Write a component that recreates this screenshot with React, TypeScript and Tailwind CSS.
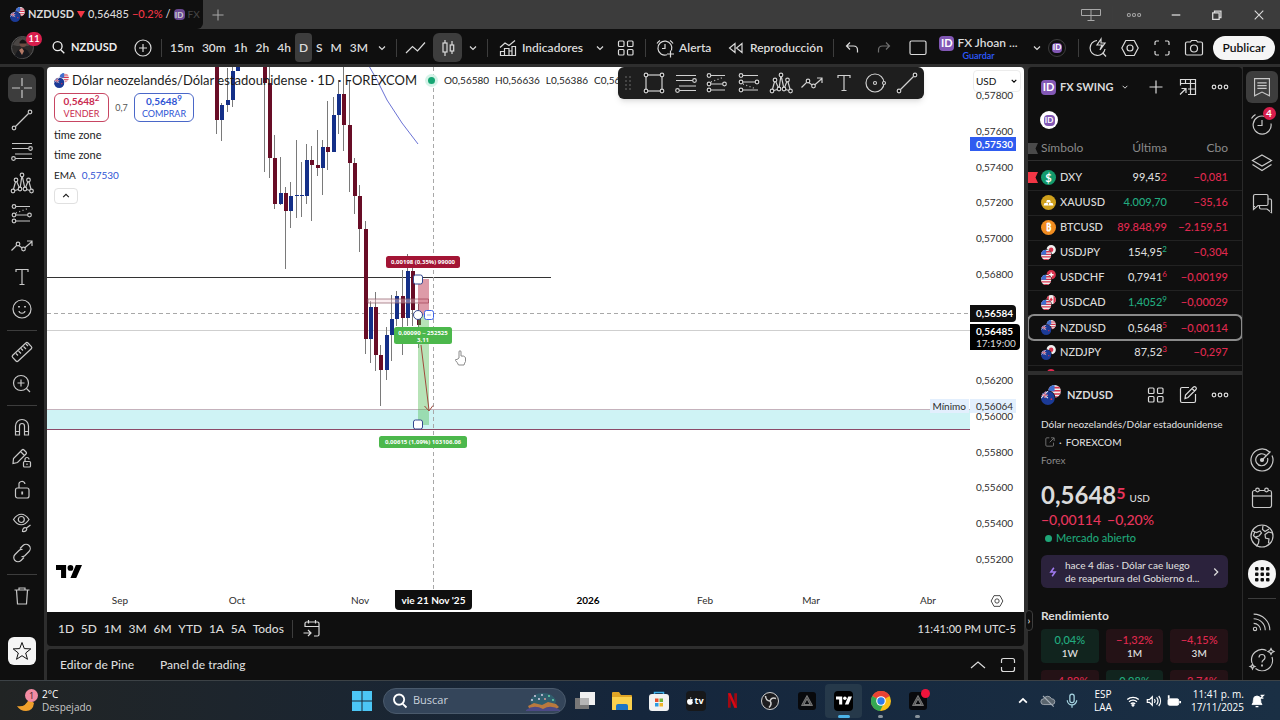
import type { ReactNode } from "react";
import clsx from "clsx";

type IconProps = { size?: number; className?: string; children: ReactNode };

const Glyph = ({ size = 28, className, children }: IconProps) => (
  <svg
    width={size}
    height={size}
    viewBox="0 0 28 28"
    fill="none"
    stroke="currentColor"
    strokeWidth="1.2"
    className={clsx("shrink-0", className)}
    aria-hidden
  >
    {children}
  </svg>
);

const Dots = ({ points, r = 1.8 }: { points: number[][]; r?: number }) => (
  <g className="fill-[#0f0f0f]">
    {points.map(([x, y]) => (
      <circle key={`${x}-${y}`} cx={x} cy={y} r={r} />
    ))}
  </g>
);

const icons: Record<string, ReactNode> = {
  cross: <path d="M14 4v8M14 16v8M4 14h8M16 14h8" />,
  trend: (
    <>
      <path d="M7.5 20.5l13-13" />
      <Dots points={[[6, 22], [22, 6]]} />
    </>
  ),
  fib: (
    <>
      <path d="M4 6.500h20M4 11.500h17M7 17h17M7 21.500h17" />
      <Dots points={[[22.5, 11.5], [5.5, 21.5]]} />
    </>
  ),
  pattern: (
    <>
      <path d="M5 22l3-11 4 9 2-14 3 14 3.500-9L23.500 22M5 22l7-2M17 20l6.500 2" />
      <Dots points={[[5, 22], [8, 11], [12, 20], [14, 6], [17, 20], [20.5, 11], [23.5, 22]]} />
    </>
  ),
  forecast: (
    <>
      <path d="M7 6.500h15M7 15h13M7 21h15" />
      <path d="M8 13l13-5" strokeDasharray="1 2.500" />
      <Dots points={[[6, 6.5], [6, 15], [21.5, 15], [6, 21]]} />
    </>
  ),
  forecastDown: (
    <>
      <path d="M7 6.500h16M7 13h14M7 21h16" />
      <path d="M8 15l13 5" strokeDasharray="1 2.500" />
      <Dots points={[[6, 6.5], [6, 13], [22, 13], [6, 21]]} />
    </>
  ),
  arrow: (
    <>
      <path d="M3.500 18.500l6-6 6 4.500 8.500-7.500M19 9h5v5" />
      <Dots points={[[10, 12], [15.5, 17]]} />
    </>
  ),
  text: <path d="M8 9V6.500h12V9M14 6.500v15M11.500 21.500h5" />,
  smile: (
    <>
      <circle cx="14" cy="14" r="9" />
      <path d="M11 11v1.500M17 11v1.500" strokeWidth="1.800" />
      <path d="M11 16c.5 3 5.500 3 6 0" />
    </>
  ),
  ruler: (
    <>
      <rect x="3.500" y="10" width="21" height="8" rx="1.500" transform="rotate(-43 14 14)" />
      <path d="M8 15.500l2 2M10.500 13l2.500 2.500M13 10.500l2 2M15.500 8.500l2.500 2.500M18 6l2 2" />
    </>
  ),
  zoomIn: (
    <>
      <circle cx="13" cy="13" r="7.500" />
      <path d="M13 9.500v7M9.500 13h7M18.500 18.500l3.500 3.500" />
    </>
  ),
  magnet: (
    <path d="M7.500 22V13a6.500 6.500 0 0 1 13 0v9h-4v-9a2.500 2.500 0 0 0-5 0v9zM7.500 18.500h4M16.500 18.500h4" />
  ),
  pencilLock: (
    <>
      <path d="M5 18.500l.5-5L14 5q1-1 2 0l2 2q1 1 0 2l-8.500 8.500zM12.500 6.500l4 4" />
      <rect x="15.500" y="16.500" width="7" height="5.500" rx="1" />
      <path d="M17 16.500v-2a2 2 0 0 1 4 0M19 18.500v1.500" />
    </>
  ),
  lock: (
    <>
      <rect x="7.500" y="12" width="13.500" height="10" rx="2" />
      <path d="M11 12V9a3 3 0 0 1 6-1" />
      <path d="M14.200 15.500v3" strokeWidth="1.800" />
    </>
  ),
  eye: (
    <>
      <path d="M5.500 11.500c4.500-7 11-7 15.500 0-4.500 7-11 7-15.500 0z" />
      <circle cx="13.300" cy="11.500" r="3" />
      <path d="M14.500 23.500c0-3 1.500-4.500 4-3.500 1 2-1 4-4 3.500zM18.500 20l4-3" />
    </>
  ),
  link: (
    <path d="M12 9.500l3-3a4 4 0 0 1 6 6l-4 4a4 4 0 0 1-3.500 1M16 18.500l-3 3a4 4 0 0 1-6-6l4-4a4 4 0 0 1 3.500-1" />
  ),
  trash: <path d="M6.500 8h15M8.500 8l1 14h9l1-14M11 8V6h6v2" />,
  star: (
    <path d="M14 5.500l2.300 6.100 6.500.3-5.100 4.100 1.800 6.300L14 18.700l-5.500 3.600 1.800-6.300-5.100-4.100 6.500-.3z" strokeWidth="1" />
  ),
  rect: (
    <>
      <rect x="6" y="6" width="16" height="16" />
      <Dots points={[[6, 6], [22, 6], [6, 22], [22, 22]]} />
    </>
  ),
  ellipse: (
    <>
      <circle cx="14" cy="14" r="9" />
      <Dots points={[[14, 14], [23, 14]]} r={1.5} />
    </>
  ),
  plus: <path d="M14 7.500v13M7.500 14h13" />,
  plusCircle: (
    <>
      <circle cx="14" cy="14" r="8" />
      <path d="M14 10v8M10 14h8" />
    </>
  ),
  search: (
    <>
      <circle cx="13" cy="12.500" r="5" strokeWidth="1.500" />
      <path d="M16.500 16.500l4 4" strokeWidth="1.500" />
    </>
  ),
  chevron: <path d="M11 12.500l3 3 3-3" />,
  line: <path d="M5 19l6.500-6.500 5 4.500L24 8.500" />,
  candles: (
    <>
      <path d="M11 6v3M11 18v4M18 7v4M18 17v3" />
      <rect x="9" y="9" width="4" height="9" />
      <rect x="16.200" y="11" width="3.500" height="6" />
    </>
  ),
  indicators: (
    <>
      <path d="M6.500 21.500v-4h4v-3h4.500v2.500h3v-4.500h3.500v9zM10.500 17v4.500M15 17v4.500M18 17v4.500" />
      <path d="M6 13.500l5-4.500 4 2.500 6-5" />
    </>
  ),
  grid: (
    <>
      <rect x="6.500" y="7" width="5.500" height="5.500" rx="1" />
      <rect x="15.500" y="7" width="5.500" height="5.500" rx="1" />
      <rect x="6.500" y="15.500" width="5.500" height="5.500" rx="1" />
      <rect x="15.500" y="15.500" width="5.500" height="5.500" rx="1" />
    </>
  ),
  alarm: (
    <path d="M20.500 16.500A7 7 0 1 0 16 20.800M14 10v4.500h-3M6 9.500a9 9 0 0 1 3-3M22 9.500a9 9 0 0 0-3-3M16 20h7M19.500 16.500v7" />
  ),
  rewind: <path d="M13 9.500v9L7.500 14zM20 9.500v9L14.500 14z" />,
  undo: <path d="M12 8.500L8.500 12l3.500 3.500M8.500 12h7q4 0 4 4v2.500" />,
  redo: <path d="M16 8.500l3.500 3.500-3.500 3.500M19.500 12h-7q-4 0-4 4v2.500" />,
  square: <rect x="6" y="7" width="16" height="13.500" rx="1.500" />,
  quick: <path d="M13 6.500a7.500 7.500 0 1 0 8 8.500M18.500 18.500l3.500 4M17 5l-4 6h5l-2 5 5-7h-4z" />,
  gear: (
    <>
      <path d="M9.800 6.500h8.400l4 7.500-4 7.500H9.800L5.800 14z" strokeLinejoin="round" />
      <circle cx="14" cy="14" r="3" />
    </>
  ),
  full: <path d="M7 11V8.500q0-1.500 1.500-1.500H11M17 7h2.500q1.500 0 1.500 1.500V11M21 17v2.500q0 1.500-1.500 1.500H17M11 21H8.500Q7 21 7 19.500V17" />,
  camera: (
    <>
      <path d="M10.500 8l1-1.500h5l1 1.500H21q1.500 0 1.500 1.500v10q0 1.500-1.500 1.500H7q-1.500 0-1.500-1.500v-10Q5.500 8 7 8z" />
      <circle cx="14" cy="14.500" r="3.500" />
    </>
  ),
  dots: (
    <>
      <circle cx="8" cy="14" r="1.800" />
      <circle cx="14" cy="14" r="1.800" />
      <circle cx="20" cy="14" r="1.800" />
    </>
  ),
  table: (
    <>
      <path d="M6.500 12.500V6.500h15v15H14M6.500 10.500h15M11.500 6.500v4M16.500 6.500v15M14 16h7.500" />
      <path d="M6 21.500l5.500-5.500M7.500 15.500H12V20" />
    </>
  ),
  edit: <path d="M15 6.500H8Q6.500 6.500 6.500 8v12q0 1.500 1.500 1.500h12q1.500 0 1.500-1.500v-7M11 17.500l.5-3.500 8-8q1-.8 2 0l.5.5q.8 1 0 2l-8 8zM18 7.500l2.500 2.500" />,
  external: <path d="M13 7.500H9Q7.500 7.500 7.500 9v10q0 1.500 1.500 1.500h9q1.500 0 1.500-1.500v-4M15.500 7.500h5v5M20 8l-6.500 6.500" />,
  bookmark: <path d="M6 5h16v18.500l-8-4-8 4zM9 9.500h10M9 12.500h10M9 15.500h10" />,
  clock: <path d="M23 13.500a9 9 0 1 1-6-7M14 10v5.500h-4.500M3.500 8.500a12 12 0 0 1 4-4" />,
  layers: <path d="M14 6l9.500 5.500L14 17l-9.500-5.500zM4.500 15.500L14 21.500l9.500-6" />,
  chat: <path d="M7 17.500H5.500V7Q5.500 5.500 7 5.500h11.500Q20 5.500 20 7v8q0 1.500-1.500 1.500H10l-4.500 4V17M20 10h2q1.500 0 1.500 1.500v12l-4.500-3.500h-6q-1.500 0-1.500-1.500v-2" />,
  radar: (
    <>
      <path d="M21.500 6A11 11 0 1 0 24 9.500M18 9.500a6 6 0 1 0 1.500 2.500M14 14l8.500-8.500" />
      <circle cx="14" cy="14" r="1.500" fill="currentColor" />
    </>
  ),
  calendar: (
    <>
      <rect x="4.500" y="6.500" width="19" height="17" rx="2" />
      <path d="M4.500 12h19" />
      <Dots points={[[9.5, 6], [18.5, 6]]} />
    </>
  ),
  globe: (
    <>
      <circle cx="14" cy="14" r="11" />
      <path d="M4.500 9l4 1.500 3.500-1.500 1.500 2-2.500 3-3.500 1 3.500 2.500-.5 3.500-2 3.500M7 9.500l-1.500 4 3 3M15 3.500l-.5 4 2.500 2 4-2.500M24.500 11l-4-1-3.500 2.500.5 3.500 3.500 1-.5 3.500 1 1" />
    </>
  ),
  rss: (
    <>
      <circle cx="6.500" cy="21.500" r="1.800" />
      <path d="M5 15.500a7.500 7.500 0 0 1 7.500 7.500M5 10.500A12.500 12.500 0 0 1 17.500 23M5 5.500A17.500 17.500 0 0 1 22.500 23" />
    </>
  ),
  help: (
    <>
      <path d="M18.500 4.500A10.500 10.500 0 0 0 4 17M7.500 22.500A10.500 10.500 0 0 0 24 11M11 11.500q0-3 3-3t3 3q0 1.500-1.500 2.500T14 16.500" />
      <path d="M14 18.500v2" strokeWidth="1.800" />
      <path d="M23 2.500l1 2 2 1-2 1-1 2-1-2-2-1 2-1zM4.500 18l.8 1.700 1.700.8-1.700.8-.8 1.700-.8-1.700L2 20.500l1.700-.8z" />
    </>
  ),
  goto: <path d="M7 12V8.500Q7 7 8.500 7h11Q21 7 21 8.500v11q0 1.500-1.500 1.500H16M7 11.500h14M10.500 5v3.500M17.500 5v3.500M5.500 18h7M10 15l3 3-3 3" />,
};

const Tool = ({ name, label, className, size }: { name: string; label: string; className?: string; size?: number }) => (
  <button type="button" aria-label={label} className={clsx("flex shrink-0 items-center justify-center rounded-md", className)}>
    <Glyph size={size}>{icons[name]}</Glyph>
  </button>
);

const IdBadge = ({ className }: { className?: string }) => (
  <span className={clsx("flex shrink-0 items-center justify-center rounded-sm bg-[#8258b5] font-bold text-white", className)}>
    ID
  </span>
);

const flagFill: Record<string, ReactNode> = {
  us: (
    <>
      <rect width="12" height="12" fill="#f0f0f0" />
      <path d="M0 2.500h12M0 5.500h12M0 8.500h12M0 11.500h12" stroke="#d8344e" strokeWidth="1.500" />
      <rect width="6" height="6" fill="#3f6fd0" />
    </>
  ),
  nz: (
    <>
      <rect width="12" height="12" fill="#1b3a96" />
      <path d="M0 1l6 5M6 0L0 6M3.500 0v6M0 3.500h6" stroke="#e8e8f0" strokeWidth=".9" />
      <path d="M3.500 0v6M0 3.500h6" stroke="#d8344e" strokeWidth=".6" />
      <circle cx="9" cy="7" r=".8" fill="#d8344e" />
    </>
  ),
  jp: (
    <>
      <rect width="12" height="12" fill="#f0f0f0" />
      <circle cx="6" cy="6" r="2.800" fill="#d8344e" />
    </>
  ),
  ch: (
    <>
      <rect width="12" height="12" fill="#d8344e" />
      <path d="M6 3v6M3 6h6" stroke="#fff" strokeWidth="1.800" />
    </>
  ),
  ca: (
    <>
      <rect width="12" height="12" fill="#f0f0f0" />
      <path d="M0 0h3v12H0zM9 0h3v12H9zM6 3l2 3-2 2-2-2z" fill="#d8344e" />
    </>
  ),
};

type PairProps = { front: string; back: string; size?: number; id: string; light?: boolean };

const Pair = ({ front, back, size = 15, id, light }: PairProps) => (
  <svg width={size} height={size} viewBox="0 0 18 18" className="shrink-0" aria-hidden>
    <defs>
      <clipPath id={`${id}-c`}>
        <circle cx="6" cy="6" r="6" />
      </clipPath>
    </defs>
    <g transform="translate(6.500 0) scale(.95)" clipPath={`url(#${id}-c)`}>
      {flagFill[back]}
    </g>
    <circle cx="6.300" cy="11.700" r="6.700" fill={light ? "#fff" : "#0f0f0f"} />
    <g transform="translate(0 5.500) scale(1.040)" clipPath={`url(#${id}-c)`}>
      {flagFill[front]}
    </g>
  </svg>
);

const TvLogo = ({ className }: { className?: string }) => (
  <svg viewBox="0 0 36 18" className={className} fill="currentColor" aria-hidden>
    <path d="M14 18H7V7H0V0h14zM28 18h-8L27.500 0H36z" />
    <circle cx="20" cy="4" r="4" />
  </svg>
);

const intervals = ["15m", "30m", "1h", "2h", "4h", "D", "S", "M", "3M"];

const Separator = ({ className }: { className?: string }) => (
  <span className={clsx("h-[18px] w-px shrink-0 bg-[#3d3d3d]", className)} />
);

const TitleBar = () => (
  <header className="flex h-[29px] shrink-0 items-center bg-[#3c3c3c] text-[#a8a8a8]">
    <div className="flex h-full w-[203px] items-center gap-[3px] rounded-br-md bg-[#0f0f0f] pl-[10px] text-[11px] font-medium whitespace-nowrap text-[#dbdbdb]">
      <Pair front="nz" back="us" id="tab" />
      <span className="font-bold">NZDUSD</span>
      <svg width="8" height="7" viewBox="0 0 8 7" fill="#f23645" aria-hidden>
        <path d="M0 0h8L4 7z" />
      </svg>
      <span>0,56485</span>
      <span className="text-[#f23645]">−0.2%</span>
      <span>/</span>
      <IdBadge className="h-[11px] w-[11px] text-[8px] opacity-80" />
      <span className="text-[10px] text-[#444]">FX</span>
    </div>
    <button type="button" aria-label="Nueva pestaña" className="ml-px flex w-7 justify-center">
      <Glyph size={24}>{icons.plus}</Glyph>
    </button>
    <div className="ml-auto flex items-center">
      <button type="button" aria-label="Diseño" className="flex w-[42px] justify-center">
        <svg width="20" height="14" viewBox="0 0 20 14" fill="none" stroke="currentColor" aria-hidden>
          <path d="M.5 1.500h19v6H.5zM10 1.500v11M6.500 12.500h7" />
        </svg>
      </button>
      <Separator />
      <button type="button" aria-label="Más" className="flex w-[42px] justify-center">
        <Glyph size={24}>{icons.dots}</Glyph>
      </button>
      <button type="button" aria-label="Minimizar" className="flex w-[41px] justify-center text-[#dcdcdc]">
        <Glyph size={20}><path d="M8 14h12" strokeWidth="1.800" /></Glyph>
      </button>
      <button type="button" aria-label="Restaurar" className="flex w-[42px] justify-center text-[#dcdcdc]">
        <Glyph size={20}><path d="M8 11h9v9H8zM10.500 11V8.500h9v9H17" strokeWidth="1.800" /></Glyph>
      </button>
      <button type="button" aria-label="Cerrar" className="flex w-[42px] justify-center text-[#dcdcdc]">
        <Glyph size={20}><path d="M8 8l12 12M20 8L8 20" strokeWidth="1.500" /></Glyph>
      </button>
    </div>
  </header>
);

const TopToolbar = () => (
  <nav className="flex h-[35px] shrink-0 items-center bg-[#0f0f0f] pt-[2px] text-xs font-semibold whitespace-nowrap text-[#dbdbdb]">
    <button type="button" aria-label="Perfil" className="relative flex w-11 justify-center">
      <svg width="23" height="23" viewBox="0 0 23 23" aria-hidden>
        <circle cx="11.500" cy="11.500" r="11" fill="#2c2a29" stroke="#555" />
        <path d="M2 9q3-7 9-8 7 0 10 7l-4 2H6z" fill="#4a4644" />
        <path d="M4 20q2-7 7-8 6 1 8 7-7 6-15 1z" fill="#17181c" />
        <circle cx="12" cy="7.500" r="3.500" fill="#6e4c42" />
        <path d="M8.500 6q3-5 7 0v1.500h-7z" fill="#141414" />
        <path d="M8 14l3-2 2 3-2 4z" fill="#b57a66" />
      </svg>
      <span className="absolute -top-1 right-[2px] flex h-[14px] w-4 items-center justify-center rounded-full bg-[#d81e4c] text-[10px] text-white">
        11
      </span>
    </button>
    <button type="button" className="flex w-20 items-center pl-[2px] text-[#f0f0f0]">
      <Glyph size={25}>{icons.search}</Glyph>
      <span className="text-[11px] font-bold">NZDUSD</span>
    </button>
    <Tool name="plusCircle" label="Comparar" className="w-[37px]" />
    <Separator />
    <div className="ml-1 flex w-[206px] shrink-0 items-center justify-between">
      {intervals.map((label) => (
        <button
          key={label}
          type="button"
          className={clsx("flex h-[29px] items-center rounded px-1", label === "D" && "bg-[#3d3d3d]")}
        >
          {label}
        </button>
      ))}
    </div>
    <Tool name="chevron" label="Intervalos" className="ml-px w-[18px]" />
    <Separator className="ml-[5px]" />
    <Tool name="line" label="Línea" className="w-9" />
    <Tool name="candles" label="Velas" className="h-[29px] w-[29px] bg-[#3d3d3d]" />
    <Tool name="chevron" label="Tipo de gráfico" className="w-[22px]" />
    <Separator className="ml-[3px]" />
    <button type="button" className="flex w-[100px] shrink-0 items-center pl-[6px]">
      <Glyph>{icons.indicators}</Glyph>
      <span>Indicadores</span>
    </button>
    <Tool name="chevron" label="Favoritos" className="w-6" />
    <Tool name="grid" label="Plantillas" className="w-7" />
    <Separator className="ml-[5px]" />
    <button type="button" className="flex w-[76px] shrink-0 items-center pl-[5px]">
      <Glyph>{icons.alarm}</Glyph>
      <span>Alerta</span>
    </button>
    <button type="button" className="flex w-[111px] shrink-0 items-center">
      <Glyph>{icons.rewind}</Glyph>
      <span>Reproducción</span>
    </button>
    <Separator />
    <div className="flex flex-1 items-center justify-end">
      <Tool name="undo" label="Deshacer" className="w-8" />
      <Tool name="redo" label="Rehacer" className="w-8 text-[#6f6f6f]" />
      <Tool name="square" label="Diseño" className="w-9" />
      <button type="button" className="flex w-[90px] flex-col items-center pr-[5px]">
        <span className="flex items-center gap-[3px] leading-4">
          <IdBadge className="h-[15px] w-[15px] text-[11px]" />
          FX Jhoan ...
        </span>
        <span className="text-[9px] leading-[9px] text-[#2d5bff]">Guardar</span>
      </button>
      <Tool name="chevron" label="Diseños" className="w-[22px]" />
      <button type="button" aria-label="Cuenta" className="flex h-[18px] w-[18px] shrink-0 items-center justify-center rounded-full border border-[#3d3d3d]">
        <IdBadge className="h-[10px] w-[10px] text-[8px]" />
      </button>
      <Separator className="ml-3" />
      <Tool name="quick" label="Búsqueda rápida" className="ml-[3px] w-8" />
      <Tool name="gear" label="Ajustes" className="w-8" />
      <Tool name="full" label="Pantalla completa" className="w-8" />
      <Tool name="camera" label="Captura" className="w-8" />
      <button type="button" className="mr-[5px] ml-[3px] h-6 w-[62px] shrink-0 rounded-full bg-[#f5f5f5] text-[#0f0f0f]">
        Publicar
      </button>
    </div>
  </nav>
);

const drawingGroups: [string, string][][] = [
  [
    ["cross", "Cruz"],
    ["trend", "Línea de tendencia"],
    ["fib", "Fibonacci"],
    ["pattern", "Patrones"],
    ["forecast", "Pronóstico"],
    ["arrow", "Flechas"],
    ["text", "Texto"],
    ["smile", "Iconos"],
  ],
  [
    ["ruler", "Medir"],
    ["zoomIn", "Acercar"],
  ],
  [
    ["magnet", "Imán"],
    ["pencilLock", "Modo dibujo"],
    ["lock", "Bloquear"],
    ["eye", "Ocultar"],
    ["link", "Vincular"],
  ],
];

const groupHeights = ["h-[249px]", "h-[60px]", "h-[154px]"];

const LeftToolbar = () => (
  <aside className="flex w-11 shrink-0 flex-col items-center rounded-tr bg-[#0f0f0f] pt-[7px] text-[#c8c8c8]">
    {drawingGroups.map((group, i) => (
      <div key={i} className="flex flex-col items-center">
        <div className={clsx("flex flex-col justify-between", groupHeights[i])}>
          {group.map(([name, label]) => (
            <Tool key={name} name={name} label={label} className={clsx("h-7 w-7", name === "cross" && "bg-[#3d3d3d]")} />
          ))}
        </div>
        <hr className="my-[7px] w-[30px] border-[#3d3d3d]" />
      </div>
    ))}
    <Tool name="trash" label="Eliminar" className="h-7 w-7" />
    <Tool name="star" label="Favoritos" className="mt-auto mb-[15px] h-7 w-7 bg-[#f5f5f5] text-[#0f0f0f]" />
  </aside>
);

// x, high, body top, body bottom, low, direction
const candles: [number, number, number, number, number, "up" | "down"][] = [
  [216, 60, 60, 120, 134, "down"],
  [221, 103, 105, 120, 141, "up"],
  [227, 68, 100, 105, 112, "up"],
  [232, 60, 71, 100, 107, "up"],
  [237, 60, 60, 71, 71, "up"],
  [264, 60, 60, 83, 172, "down"],
  [269, 67, 83, 158, 178, "down"],
  [274, 135, 158, 204, 209, "down"],
  [280, 157, 193, 204, 205, "up"],
  [285, 187, 193, 211, 269, "down"],
  [290, 182, 196, 211, 228, "up"],
  [296, 140, 195, 196, 218, "up"],
  [301, 162, 195, 196, 217, "up"],
  [306, 144, 160, 196, 204, "up"],
  [311, 146, 160, 165, 221, "down"],
  [317, 130, 165, 168, 176, "down"],
  [322, 140, 147, 168, 195, "up"],
  [327, 101, 147, 152, 170, "down"],
  [333, 97, 115, 152, 152, "up"],
  [338, 80, 94, 115, 134, "up"],
  [343, 60, 94, 125, 151, "down"],
  [349, 81, 125, 163, 192, "down"],
  [354, 158, 163, 196, 214, "down"],
  [359, 185, 196, 229, 252, "down"],
  [365, 221, 229, 339, 354, "down"],
  [370, 301, 307, 339, 363, "up"],
  [375, 292, 307, 355, 371, "down"],
  [380, 345, 355, 370, 406, "down"],
  [386, 327, 335, 370, 380, "up"],
  [391, 295, 319, 335, 361, "up"],
  [396, 291, 296, 319, 326, "up"],
  [402, 270, 296, 318, 355, "down"],
  [407, 254, 271, 318, 326, "up"],
  [412, 266, 271, 310, 326, "down"],
  [418, 304, 316, 325, 348, "down"],
];

type ChartTagProps = { x: number; y: number; w: number; h?: number; fill: string; lines: string[] };

const ChartTag = ({ x, y, w, h = 12, fill, lines }: ChartTagProps) => (
  <g>
    <rect x={x} y={y} width={w} height={h} rx="2.500" fill={fill} />
    {lines.map((line, i) => (
      <text key={line} x={x + w / 2} y={y + 8 + i * 7} textAnchor="middle" className="fill-white font-['Open_Sans','Noto_Sans',sans-serif] text-[6px] font-bold">
        {line}
      </text>
    ))}
  </g>
);

const Plot = () => (
  <svg className="h-full w-full" viewBox="47 67 923 523" preserveAspectRatio="xMinYMin slice" role="img" aria-label="NZDUSD 1D">
    <rect x="47" y="410" width="923" height="20" fill="#cff3f5" />
    <path d="M47 409.500h923" stroke="#c4b3bd" />
    <path d="M47 429.500h923" stroke="#8c4a68" />
    <path d="M47 330.500h923" stroke="#cfcfcf" />
    <path d="M47 277.500h504" stroke="#333" />
    <path d="M47 313.500h923M433.500 67v523" stroke="#a8a8a8" strokeDasharray="4 3" />
    <path d="M369 66l8 14 10 20 15 23 16 21" fill="none" stroke="#6a72d4" strokeWidth="1" />
    {candles.map(([x, high, top, bottom, low, dir]) => (
      <g key={x}>
        <path d={`M${x + 0.5} ${high}V${low}`} stroke="#7a7a7a" />
        <rect x={x - 1} y={top} width="4" height={bottom - top} fill={dir === "up" ? "#142f88" : "#680d26"} />
      </g>
    ))}
    <path d="M368 299h60.500v4H368z" fill="#f6d5dc" fillOpacity=".4" stroke="#8c5a66" strokeWidth=".7" />
    <rect x="418" y="279" width="11" height="36" fill="#b3213f" fillOpacity=".45" />
    <rect x="418" y="315" width="11" height="110" fill="#4cb84c" fillOpacity=".4" />
    <path d="M421 345l8 65M424.500 406l4.500 5 4-5.500" fill="none" stroke="#a04a3c" />
    <ChartTag x={386} y={256} w={74} fill="#a31535" lines={["0,00198 (0,35%) 99000"]} />
    <ChartTag x={394} y={327} w={58} h={17} fill="#4cb84c" lines={["0,00090 ~ 252525", "3,11"]} />
    <ChartTag x={379} y={436} w={88} fill="#4cb84c" lines={["0,00615 (1,09%) 103106.06"]} />
    <g fill="#fff" stroke="#34488f">
      <rect x="413.500" y="275" width="9" height="9" rx="2" />
      <rect x="413.500" y="420" width="9" height="9" rx="2" />
      <circle cx="418" cy="315" r="4.500" />
      <rect x="424.500" y="310.500" width="9" height="9" rx="2" stroke="#3d63e8" />
    </g>
    <path d="M427 315h4" stroke="#9bb0f0" />
    <path
      d="M459 358v-6q0-1.300 1-1.300t1 1.300v4q3-.5 4.500 1.500v4q-1 1.500-1.500 3.500h-5.500q-1-2.500-3-4.500-.5-1.500 1.500-1z"
      fill="#fff"
      stroke="#8a8a8a"
    />
  </svg>
);

const prices = [
  "0,57800", "0,57600", "0,57400", "0,57200", "0,57000", "0,56800", "", "",
  "0,56200", "0,56000", "0,55800", "0,55600", "0,55400", "0,55200",
];

const PriceAxis = () => (
  <div className="relative flex w-[54px] shrink-0 flex-col pt-[11px] pb-3 text-[10px] text-[#2e2e2e]">
    {prices.map((price, i) => (
      <span key={i} className="flex flex-1 items-center pl-[6px]">
        {price}
      </span>
    ))}
    <select aria-label="Divisa" className="absolute top-[3px] left-[3px] h-[22px] w-12 appearance-none rounded border border-[#ececec] bg-white px-[2px] text-[10px] text-[#0f0f0f]">
      <option>USD</option>
    </select>
    <Glyph size={16} className="pointer-events-none absolute top-[6px] right-[2px] text-black">
      <path d="M10 12l4 4 4-4" strokeWidth="2" />
    </Glyph>
    <span className="absolute top-[70px] left-0 h-[14px] w-[46px] bg-[#2f5cf0] pl-[6px] leading-[14px] font-bold text-white">0,57530</span>
    <span className="absolute top-[238px] left-0 h-[17px] w-[46px] rounded-r-sm bg-[#0f0f0f] pl-[6px] leading-[17px] font-bold text-white">0,56584</span>
    <span className="absolute top-[257px] left-0 h-[26px] w-[50px] rounded-r-sm bg-black pt-px pl-[6px] leading-3 text-[#dbdbdb]">
      <b className="text-white">0,56485</b>
      <br />
      17:19:00
    </span>
    <span className="absolute top-[332px] left-0 h-[14px] w-[46px] bg-[#e3effd] pl-[6px] leading-[14px]">0,56064</span>
    <span className="absolute top-[332px] right-full mr-px h-[14px] bg-[#e3effd] px-[3px] leading-[14px]">Mínimo</span>
  </div>
);

const Legend = () => (
  <div className="absolute top-[5px] left-[7px] flex flex-col items-start text-[#1c1c1c]">
    <div className="flex h-4 items-center gap-[3px] whitespace-nowrap">
      <Pair front="nz" back="us" id="legend" light />
      <h1 className="text-[13px] leading-4">Dólar neozelandés/Dólar estadounidense · 1D · FOREXCOM</h1>
      <span className="ml-2 h-[7px] w-[7px] rounded-full bg-[#16a673] ring-3 ring-[#d5f3e8]" />
      <span className="ml-[6px] flex gap-[6px] text-[10px]">
        <span>O0,56580</span>
        <span>H0,56636</span>
        <span>L0,56386</span>
        <span>C0,56485</span>
      </span>
    </div>
    <div className="mt-[5px] flex items-center text-center text-[10px] leading-[12px]">
      <button type="button" className="h-[29px] w-[55px] rounded-md border border-[#c74562] text-[#c92a50]">
        <b>0,5648<sup className="text-[8px]">2</sup></b>
        <br />
        <span className="text-[9px]">VENDER</span>
      </button>
      <span className="w-[25px] text-[9px] text-[#555]">0,7</span>
      <button type="button" className="h-[29px] w-[60px] rounded-md border border-[#4a67c8] text-[#2f55d4]">
        <b>0,5648<sup className="text-[8px]">9</sup></b>
        <br />
        <span className="text-[9px]">COMPRAR</span>
      </button>
    </div>
    <p className="mt-[3px] text-[11px] leading-5">time zone</p>
    <p className="text-[11px] leading-5">time zone</p>
    <p className="flex gap-[6px] text-[10px] leading-5">
      <span>EMA</span>
      <span className="text-[#2f55d4]">0,57530</span>
    </p>
    <button type="button" aria-label="Contraer" className="mt-[3px] flex h-4 w-6 items-center justify-center rounded-sm border border-[#e0e0e0]">
      <Glyph size={16}><path d="M9 16l5-5 5 5" strokeWidth="2" /></Glyph>
    </button>
  </div>
);

const floatingTools: [string, string][] = [
  ["rect", "Rectángulo"],
  ["fib", "Retroceso"],
  ["forecast", "Posición larga"],
  ["forecastDown", "Posición corta"],
  ["pattern", "Patrón"],
  ["arrow", "Trayectoria"],
  ["text", "Texto"],
  ["ellipse", "Círculo"],
  ["trend", "Tendencia"],
];

const FloatingToolbar = () => (
  <div className="absolute top-0 left-[571px] flex h-8 w-[306px] items-center rounded-md bg-[#1e1e1e] text-[#d0d0d0] shadow-md">
    <svg width="20" height="14" viewBox="0 0 20 14" fill="#777" className="mr-[2px]" aria-hidden>
      {[1, 5, 9, 13].map((y) => (
        <g key={y}>
          <circle cx="8" cy={y} r=".8" />
          <circle cx="12" cy={y} r=".8" />
        </g>
      ))}
    </svg>
    <div className="flex flex-1 justify-between pr-[3px]">
      {floatingTools.map(([name, label]) => (
        <Tool key={name} name={name} label={label} className="h-7 w-7" />
      ))}
    </div>
  </div>
);

const months = ["Sep", "Oct", "Nov", "2026", "Feb", "Mar", "Abr"];

const Chart = () => (
  <section className="relative flex min-h-0 flex-1 flex-col overflow-hidden rounded-t bg-white">
    <div className="flex min-h-0 flex-1">
      <div className="relative min-w-0 flex-1">
        <div className="absolute inset-0">
          <Plot />
        </div>
        <Legend />
        <TvLogo className="absolute bottom-[11px] left-[9px] h-[13px] w-[26px] text-black" />
      </div>
      <PriceAxis />
    </div>
    <div className="relative flex h-[23px] shrink-0 items-center text-[10px] text-[#2e2e2e]">
      <div className="grid flex-1 grid-cols-[73fr_117fr_123fr_228fr_117fr_106fr_117fr_42fr]">
        {months.map((month) => (
          <span key={month} className={clsx("translate-x-1/2 justify-self-end", month === "2026" && "font-bold text-black")}>
            {month}
          </span>
        ))}
      </div>
      <div className="flex w-[54px] justify-center">
        <Glyph size={20}>{icons.gear}</Glyph>
      </div>
      <span className="absolute top-px left-[348px] flex h-5 w-[77px] items-center justify-center rounded-b-sm bg-[#0f0f0f] font-bold text-white">
        vie 21 Nov '25
      </span>
    </div>
    <FloatingToolbar />
  </section>
);

const ranges = ["1D", "5D", "1M", "3M", "6M", "YTD", "1A", "5A", "Todos"];

const ChartFooter = () => (
  <>
    <div className="flex h-[34px] shrink-0 items-center rounded-b bg-[#0f0f0f] pr-2 pl-[11px] text-xs font-medium text-[#dbdbdb]">
      <div className="flex w-[226px] justify-between">
        {ranges.map((range) => (
          <button key={range} type="button">
            {range}
          </button>
        ))}
      </div>
      <Separator className="ml-2" />
      <Tool name="goto" label="Ir a la fecha" className="ml-[5px]" />
      <span className="ml-auto text-[11px]">11:41:00 PM UTC-5</span>
    </div>
    <div className="mt-[3px] flex h-[31px] shrink-0 items-center rounded-t bg-[#0f0f0f] pr-[2px] pl-[13px] text-xs font-medium text-[#dbdbdb]">
      <button type="button" className="w-[100px] text-left">Editor de Pine</button>
      <button type="button">Panel de trading</button>
      <button type="button" aria-label="Abrir panel" className="ml-auto">
        <Glyph><path d="M7 17l7-6 7 6" /></Glyph>
      </button>
      <button type="button" aria-label="Maximizar panel" className="ml-[2px]">
        <Glyph><path d="M7.500 12V9.500q0-2 2-2h9q2 0 2 2V12M7.500 16v2.500q0 2 2 2h9q2 0 2-2V16" /></Glyph>
      </button>
    </div>
  </>
);

type Row = {
  symbol: string;
  last: string;
  tail: string;
  change: string;
  icon: ReactNode;
  lastColor?: string;
  tailColor: string;
  sup?: boolean;
  flag?: boolean;
};

const Coin = ({ fill, children }: { fill: string; children: ReactNode }) => (
  <svg width="15" height="15" viewBox="0 0 15 15" className="shrink-0" aria-hidden>
    <circle cx="7.500" cy="7.500" r="7.500" fill={fill} />
    {children}
  </svg>
);

const red = "text-[#e0294f]";
const green = "text-[#22ab7f]";

const rows: Row[] = [
  {
    symbol: "DXY", last: "99,45", tail: "2", change: "−0,081", tailColor: red, flag: true,
    icon: <Coin fill="#139a6c"><text x="7.500" y="11.500" textAnchor="middle" fill="#fff" fontSize="11" fontWeight="700">$</text></Coin>,
  },
  {
    symbol: "XAUUSD", last: "4.009,70", tail: "", change: "−35,16", lastColor: green, tailColor: green,
    icon: <Coin fill="#cfa01c"><path d="M6 5h3l1 2.500H5zM3.500 8h3.300l.7 2.500h-5zM8.200 8h3.300l1 2.500h-5z" fill="#fff" /></Coin>,
  },
  {
    symbol: "BTCUSD", last: "89.848,99", tail: "", change: "−2.159,51", lastColor: red, tailColor: red,
    icon: <Coin fill="#f08c20"><text x="7.500" y="11" textAnchor="middle" fill="#fff" fontSize="10" fontWeight="700">₿</text></Coin>,
  },
  { symbol: "USDJPY", last: "154,95", tail: "2", change: "−0,304", tailColor: green, sup: true, icon: <Pair front="us" back="jp" id="usdjpy" /> },
  { symbol: "USDCHF", last: "0,7941", tail: "6", change: "−0,00199", tailColor: red, sup: true, icon: <Pair front="us" back="ch" id="usdchf" /> },
  { symbol: "USDCAD", last: "1,4052", tail: "9", change: "−0,00029", lastColor: green, tailColor: green, sup: true, icon: <Pair front="us" back="ca" id="usdcad" /> },
  { symbol: "NZDUSD", last: "0,5648", tail: "5", change: "−0,00114", tailColor: red, sup: true, icon: <Pair front="nz" back="us" id="nzdusd" /> },
  { symbol: "NZDJPY", last: "87,52", tail: "3", change: "−0,297", tailColor: red, sup: true, icon: <Pair front="nz" back="jp" id="nzdjpy" /> },
];

const Flag = ({ className }: { className: string }) => (
  <svg width="10" height="11" viewBox="0 0 10 11" className={className} fill="currentColor" aria-hidden>
    <path d="M0 0h10L7.500 5.500 10 11H0z" />
  </svg>
);

const Watchlist = () => (
  <section className="flex h-[304px] shrink-0 flex-col overflow-hidden rounded-t bg-[#0f0f0f] text-[#dbdbdb]">
    <div className="flex h-10 shrink-0 items-center pl-[13px]">
      <IdBadge className="h-[15px] w-[15px] text-[11px]" />
      <button type="button" className="ml-1 flex items-center text-[11px] font-bold whitespace-nowrap">
        FX SWING
        <Glyph size={22}>{icons.chevron}</Glyph>
      </button>
      <div className="ml-auto flex pr-[6px]">
        <Tool name="plus" label="Añadir símbolo" className="w-8" />
        <Tool name="table" label="Vista de tabla" className="w-8" />
        <Tool name="dots" label="Más" className="w-8" />
      </div>
    </div>
    <div className="flex h-[29px] shrink-0 items-start pt-[4px] pl-[12px]">
      <span className="flex h-[18px] w-[18px] items-center justify-center rounded-full bg-white">
        <IdBadge className="h-[11px] w-[11px] text-[8px]" />
      </span>
    </div>
    <table className="w-full shrink-0 table-fixed text-[11px] whitespace-nowrap">
      <thead className="text-[#8a8a8a]">
        <tr className="h-6 border-b border-[#2e2e2e]">
          <th className="relative w-[78px] pl-[13px] text-left text-xs font-normal">
            <Flag className="absolute top-[7px] left-0 text-[#4a4a4a]" />
            Símbolo
          </th>
          <th className="text-right text-xs font-normal">Última</th>
          <th className="w-[75px] pr-[14px] text-right text-xs font-normal">Cbo</th>
        </tr>
      </thead>
      <tbody>
        <tr className="h-[5px]"><td colSpan={3} /></tr>
        {rows.map((row) => (
          <tr
            key={row.symbol}
            className={clsx(
              "h-[25px]",
              row.symbol === "NZDUSD" ? "rounded-md outline-2 -outline-offset-1 outline-[#8a8a8a]" : "border-b border-[#222]"
            )}
          >
            <td className="relative p-0 pl-[13px]">
              {row.flag && <Flag className="absolute top-[7px] left-0 text-[#f23645]" />}
              <span className="flex items-center gap-1 font-medium">
                {row.icon}
                {row.symbol}
              </span>
            </td>
            <td className={clsx("p-0 text-right font-medium", row.lastColor)}>
              {row.last}
              {row.sup ? (
                <sup className={clsx("text-[8px]", row.tailColor)}>{row.tail}</sup>
              ) : (
                <span className={row.tailColor}>{row.tail}</span>
              )}
            </td>
            <td className={clsx("p-0 pr-[14px] text-right font-medium", red)}>{row.change}</td>
          </tr>
        ))}
      </tbody>
    </table>
    <span className="mt-[3px] ml-[19px] h-2 w-2 shrink-0 rounded-full bg-[#e0294f]" />
  </section>
);

const performance = [
  ["0,04%", "1W"],
  ["−1,32%", "1M"],
  ["−4,15%", "3M"],
  ["−4,89%"],
  ["0,98%"],
  ["−3,74%"],
];

const Details = () => (
  <section className="mt-[4px] min-h-0 flex-1 overflow-hidden bg-[#0f0f0f] pl-[13px] text-[#dbdbdb]">
    <div className="flex h-10 items-center">
      <Pair front="nz" back="us" size={20} id="details" />
      <h2 className="ml-[6px] text-[11px] font-bold">NZDUSD</h2>
      <div className="ml-auto flex pr-[6px]">
        <Tool name="grid" label="Paneles" className="w-8" />
        <Tool name="edit" label="Notas" className="w-8" />
        <Tool name="dots" label="Más" className="w-8" />
      </div>
    </div>
    <p className="text-[10px] leading-[18px] font-medium whitespace-nowrap">Dólar neozelandés/Dólar estadounidense</p>
    <p className="flex h-[18px] items-center text-[10px] font-medium">
      <Glyph size={18} className="text-[#8a8a8a]">{icons.external}</Glyph>
      <span className="mr-1">·</span>FOREXCOM
    </p>
    <p className="text-[10px] leading-[18px] text-[#8a8a8a]">Forex</p>
    <p className="mt-[10px] flex h-8 items-center text-2xl font-bold">
      0,5648<span className="mb-1 text-base text-[#e8355c]">5</span>
      <span className="mt-2 ml-1 text-[10px] font-medium">USD</span>
    </p>
    <p className="flex gap-[6px] text-[14px] leading-[18px] font-medium text-[#e8355c]">
      <span>−0,00114</span>
      <span>−0,20%</span>
    </p>
    <p className="flex items-center gap-1 pl-1 text-[11px] leading-[18px] font-medium text-[#1fa678]">
      <span className="h-[7px] w-[7px] rounded-full bg-current" />
      Mercado abierto
    </p>
    <a href="#noticia" className="mt-[8px] mr-[14px] flex h-[33px] items-center rounded-md bg-[#2b223c] text-[10px] leading-[13px] font-medium whitespace-nowrap">
      <Glyph size={24} className="text-[#a07af0]">
        <path d="M15 9l-3.500 5h5L13 19" strokeWidth="1.800" />
      </Glyph>
      <span className="flex-1">
        hace 4 días · Dólar cae luego
        <br />
        de reapertura del Gobierno d...
      </span>
      <Glyph size={24}><path d="M12 10l4 4-4 4" strokeWidth="1.500" /></Glyph>
    </a>
    <h3 className="mt-[19px] text-xs leading-[18px] font-bold">Rendimiento</h3>
    <div className="mt-[4px] mr-[14px] grid grid-cols-3 gap-[7px]">
      {performance.map(([value, period]) => (
        <div
          key={value}
          className={clsx("flex h-[34px] flex-col items-center rounded-sm pt-[3px]", value.startsWith("−") ? "bg-[#241216]" : "bg-[#11241e]")}
        >
          <span className={clsx("text-[11px] leading-[15px] font-medium", value.startsWith("−") ? red : green)}>{value}</span>
          {period && <span className="text-[10px] leading-[13px] font-semibold">{period}</span>}
        </div>
      ))}
    </div>
  </section>
);

const RightStrip = () => (
  <aside className="flex w-[38px] shrink-0 flex-col items-center border-l border-[#2a2a2a] bg-[#0f0f0f] pt-1 pb-1 text-[#c8c8c8]">
    <Tool name="bookmark" label="Lista de seguimiento" size={26} className="h-8 w-8 bg-[#3d3d3d]" />
    <div className="relative mt-[5px]">
      <Tool name="clock" label="Alertas" className="h-8 w-8" />
      <span className="absolute -top-px right-[2px] flex h-[13px] w-[13px] items-center justify-center rounded-full bg-[#d81e4c] text-[10px] font-bold text-white">4</span>
    </div>
    <Tool name="layers" label="Árbol de objetos" className="mt-[7px] h-8 w-8" />
    <Tool name="chat" label="Chats" className="mt-[8px] h-8 w-8" size={28} />
    <div className="mt-auto flex flex-col items-center gap-[6px]">
      <Tool name="radar" label="Filtros" className="h-8 w-8" />
      <Tool name="calendar" label="Calendario" className="h-8 w-8" size={28} />
      <Tool name="globe" label="Comunidad" className="h-8 w-8" />
      <button type="button" aria-label="Productos" className="flex h-8 w-8 items-center justify-center">
        <svg width="28" height="28" viewBox="0 0 28 28" aria-hidden>
          <circle cx="14" cy="14" r="14" fill="#f5f5f5" />
          {[7, 12.5, 18].map((y) => [7, 12.5, 18].map((x) => <rect key={`${x}-${y}`} x={x} y={y} width="3.500" height="3.500" rx="1" fill="#0f0f0f" />))}
        </svg>
      </button>
    </div>
    <hr className="mt-2 mb-[7px] w-7 border-[#3d3d3d]" />
    <Tool name="rss" label="Noticias" className="h-8 w-8" size={26} />
    <Tool name="help" label="Ayuda" className="mt-[6px] h-8 w-8" />
  </aside>
);

const AppMark = ({ alert }: { alert?: boolean }) => (
  <svg width="26" height="24" viewBox="0 0 26 24" aria-hidden>
    <rect x="4" y="3" width="18" height="18" rx="3" fill="#08090c" />
    <path d="M13 6.500l5.500 10h-11zM13 10l-3 5.500h6z" fill="#555" stroke="#8a8a8a" strokeWidth=".8" />
    {alert && <circle cx="20.500" cy="4.500" r="4.500" fill="#f0143c" />}
  </svg>
);

const taskApps: { label: string; icon: ReactNode; active?: boolean; running?: boolean }[] = [
  {
    label: "Vista de tareas",
    icon: (
      <svg width="20" height="20" viewBox="0 0 20 20">
        <rect x="5" y="1" width="15" height="13" fill="#f0f0f0" />
        <rect x="0" y="7" width="14" height="11" fill="#777" />
        <rect x="5" y="7" width="9" height="7" fill="#b5b5b5" />
      </svg>
    ),
  },
  {
    label: "Explorador",
    icon: (
      <svg width="22" height="20" viewBox="0 0 22 20">
        <path d="M1 2q0-1 1-1h6l2 3h10q1 0 1 1v14H1z" fill="#e0a526" />
        <path d="M1 6h20v12q0 1-1 1H2q-1 0-1-1z" fill="#fbd14e" />
        <path d="M5 19v-4q0-2 2-2h8q2 0 2 2v4z" fill="#1d74c4" />
      </svg>
    ),
  },
  {
    label: "Store",
    icon: (
      <svg width="20" height="22" viewBox="0 0 20 22">
        <path d="M5.500 6V2.500h9V6" fill="none" stroke="#3fb0ea" strokeWidth="1.500" />
        <rect y="4" width="20" height="17" rx="3" fill="#f2f2f2" />
        <path d="M6 8.500h3.500V12H6z" fill="#e8502c" />
        <path d="M10.500 8.500H14V12h-3.500z" fill="#6db33a" />
        <path d="M6 13h3.500v3.500H6z" fill="#2d9be0" />
        <path d="M10.500 13H14v3.500h-3.500z" fill="#f0b428" />
      </svg>
    ),
  },
  {
    label: "Apple TV",
    icon: (
      <span className="flex h-5 w-5 items-center justify-center gap-px rounded bg-[#17181a] text-[9px] font-bold text-white">
        <svg width="6" height="8" viewBox="0 0 6 8" fill="#fff">
          <path d="M3 2.200q2-.8 3 .5-1.300 1.300 0 2.800Q5 8.400 3 7.700.5 8.400 0 5 0 1.500 3 2.200zM3 1.800Q3 .3 4.300 0q0 1.500-1.300 1.800z" />
        </svg>
        tv
      </span>
    ),
  },
  {
    label: "Netflix",
    icon: (
      <svg width="9" height="15" viewBox="0 0 10 16">
        <path d="M0 0h3v16H0zM7 0h3v16H7z" fill="#a00912" />
        <path d="M0 0h3l7 16H7z" fill="#d80814" />
      </svg>
    ),
  },
  {
    label: "OBS",
    icon: (
      <svg width="20" height="20" viewBox="0 0 20 20" fill="none" stroke="#d0d0d0">
        <circle cx="10" cy="10" r="8.500" fill="#1d1d20" strokeWidth="1" />
        <path d="M10 10q-4 0-4.500-5M10 10q1.500-4 6-2.500M10 10q2.500 3-1 6.500" strokeWidth="1.500" />
      </svg>
    ),
  },
  { label: "Aplicación", icon: <AppMark /> },
  {
    label: "TradingView",
    active: true,
    icon: (
      <span className="flex h-5 w-[19px] items-center justify-center rounded bg-black text-white">
        <TvLogo className="h-[9px] w-4" />
      </span>
    ),
  },
  {
    label: "Chrome",
    running: true,
    icon: (
      <svg width="20" height="20" viewBox="0 0 20 20">
        <circle cx="10" cy="10" r="10" fill="#fbc116" />
        <path d="M10 10L1.300 5A10 10 0 0 1 18.700 5z" fill="#ea4335" />
        <path d="M10 10L1.300 5A10 10 0 0 0 9 20l4-8z" fill="#34a853" />
        <path d="M10 5h8.700L17 3z" fill="#ea4335" />
        <circle cx="10" cy="10" r="4.800" fill="#fff" />
        <circle cx="10" cy="10" r="3.700" fill="#2f7bea" />
      </svg>
    ),
  },
  { label: "Aplicación con avisos", running: true, icon: <AppMark alert /> },
];

const Taskbar = () => (
  <footer className="grid h-10 shrink-0 grid-cols-[1fr_auto_1fr] items-center border-t border-[#3c4246] bg-linear-to-r from-[#212424] via-[#15263c] to-[#1a2f44] font-['Open_Sans','Noto_Sans',sans-serif] text-white">
    <div className="flex items-center gap-1 pl-4 text-[10px] leading-[13px]">
      <span className="relative">
        <svg width="22" height="24" viewBox="0 0 22 24" aria-hidden>
          <path d="M1 17q8 2 12-7l5 4q-1 8-8 8-6 0-9-5z" fill="#f0a02c" />
        </svg>
        <span className="absolute top-0 right-0 flex h-[13px] w-[13px] items-center justify-center rounded-full bg-[#f28ba2] text-[9px] text-[#3a1c24]">1</span>
      </span>
      <span>
        2°C
        <br />
        <span className="text-[#c8c8c8]">Despejado</span>
      </span>
    </div>
    <div className="flex items-center pl-2">
      <button type="button" aria-label="Inicio" className="mr-[11px]">
        <svg width="20" height="20" viewBox="0 0 20 20" aria-hidden>
          <path d="M0 0h9.500v9.500H0zM10.500 0H20v9.500h-9.500zM0 10.500h9.500V20H0zM10.500 10.500H20V20h-9.500z" fill="#4cc6f5" />
        </svg>
      </button>
      <label className="flex h-[26px] w-[183px] items-center overflow-hidden rounded-full border border-[#4a5a6c] bg-[#34455a] pl-[3px]">
        <Glyph size={26}>
          <circle cx="13" cy="12.500" r="5.500" strokeWidth="2" />
          <path d="M17 17l4 4" strokeWidth="2" />
        </Glyph>
        <input aria-label="Buscar" placeholder="Buscar" className="w-0 flex-1 bg-transparent text-[11px] outline-none placeholder:text-[#c9d2dc]" />
        <svg width="34" height="20" viewBox="0 0 34 20" className="mr-[5px]" aria-hidden>
          <path d="M4 10q3-8 13-8t13 8l-2 6H7z" fill="#2f6f7c" opacity=".6" />
          <path d="M2 15l6-3 8 2 6-3 8 2 3 3-4 3H4z" fill="#b9793e" />
          <path d="M0 19q8-6 17-1 8-5 17 1v1H0z" fill="#4c4a86" />
          <g fill="#e8d8f0">
            <circle cx="6" cy="9" r=".9" />
            <circle cx="9" cy="5" r=".9" />
            <circle cx="13" cy="8" r=".9" />
            <circle cx="16" cy="4" r=".9" />
            <circle cx="19" cy="8" r=".9" fill="#f0a0a0" />
            <circle cx="23" cy="5" r=".9" fill="#6fe0b0" />
            <circle cx="27" cy="9" r=".9" fill="#6fe0b0" />
          </g>
        </svg>
      </label>
      {taskApps.map((app) => (
        <button
          key={app.label}
          type="button"
          aria-label={app.label}
          className={clsx("relative flex h-[34px] w-[37px] items-center justify-center rounded", app.active && "bg-[#26394a]")}
        >
          {app.icon}
          {app.active && <span className="absolute bottom-0 h-[3px] w-3 rounded-full bg-[#4cb4e8]" />}
          {app.running && <span className="absolute bottom-0 h-[3px] w-[5px] rounded-full bg-[#8a949c]" />}
        </button>
      ))}
    </div>
    <div className="flex items-center justify-end pr-[13px] text-[10px] leading-[13px] whitespace-nowrap">
      <Glyph size={24} className="mr-[3px]"><path d="M9.500 16l4.500-4.500 4.500 4.500" strokeWidth="2" /></Glyph>
      <Glyph size={20} className="mr-[2px] text-[#a8b0b8]">
        <path d="M8 19a4 4 0 0 1 0-8 6 6 0 0 1 11 0 4 4 0 0 1 1 8z" fill="#5a656e" />
        <path d="M7 7l15 15" strokeWidth="1.500" />
      </Glyph>
      <Glyph size={24} className="mr-[10px] text-[#a5d3e0]">
        <rect x="11.500" y="6" width="5" height="10" rx="2.500" strokeWidth="1.500" />
        <path d="M8.500 13a5.500 5.500 0 0 0 11 0M14 18.500V22" strokeWidth="1.500" />
      </Glyph>
      <span className="mr-[11px] text-center">
        ESP
        <br />
        LAA
      </span>
      <Glyph size={20}>
        <path d="M6 12a12 12 0 0 1 16 0M8.500 15a8 8 0 0 1 11 0M11 18a4.500 4.500 0 0 1 6 0" strokeWidth="2" />
        <circle cx="14" cy="20" r="1.500" fill="currentColor" />
      </Glyph>
      <Glyph size={20}>
        <path d="M6 12h3l4-4v12l-4-4H6zM16 11.500a4 4 0 0 1 0 5M19 9a8 8 0 0 1 0 10M22 7a11 11 0 0 1 0 14" strokeWidth="1.700" />
      </Glyph>
      <Glyph size={20}>
        <rect x="7" y="11" width="15" height="9" rx="2" fill="currentColor" />
        <path d="M24 14v3M8 6v5" strokeWidth="2.500" />
      </Glyph>
      <span className="ml-2 text-right">
        11:41 p. m.
        <br />
        17/11/2025
      </span>
      <Glyph size={20} className="ml-[3px]">
        <path d="M7 19q2-2 2-7a5 5 0 0 1 10 0q0 5 2 7z" fill="currentColor" />
        <path d="M12 22h4M19 6h4l-4 4h4" strokeWidth="1.800" />
      </Glyph>
    </div>
  </footer>
);

const App = () => (
  <div className="flex h-screen flex-col overflow-hidden bg-[#2e2e2e] font-['Lato','Noto_Sans',sans-serif]">
    <TitleBar />
    <TopToolbar />
    <div className="mt-[3px] flex min-h-0 flex-1">
      <LeftToolbar />
      <main className="ml-[3px] flex min-w-0 flex-1 flex-col">
        <Chart />
        <ChartFooter />
      </main>
      <div className="relative ml-1 flex w-[214px] shrink-0 flex-col">
        <Watchlist />
        <Details />
        <button type="button" aria-label="Ocultar panel" className="absolute top-[543px] -left-[3px] flex h-[21px] w-2 items-center justify-center rounded border border-[#3d3d3d] bg-[#0f0f0f] text-[10px] text-white">
          ›
        </button>
      </div>
      <RightStrip />
    </div>
    <Taskbar />
  </div>
);

export default App;
